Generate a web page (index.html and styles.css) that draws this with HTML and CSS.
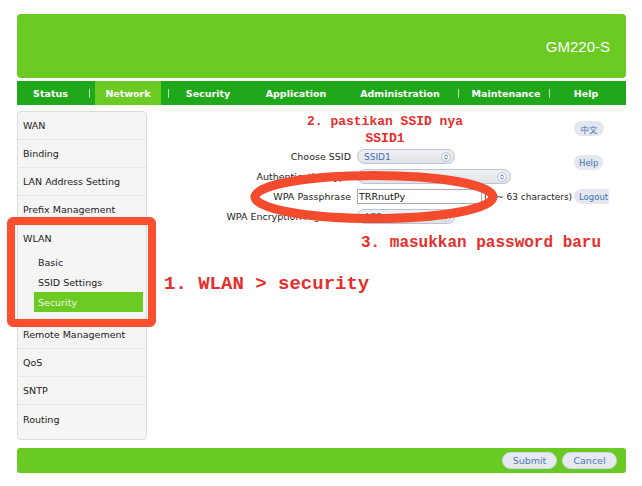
FILE: index.html
```html
<!DOCTYPE html>
<html lang="en">
<head>
    <meta charset="UTF-8">
    <meta name="viewport" content="width=device-width, initial-scale=1.0">
    <title>GM220-S - WLAN Security</title>
    <link rel="stylesheet" href="styles.css">
</head>
<body>

    <div class="page">
        <header class="banner">
            <span class="model">GM220-S</span>
        </header>

        <nav class="menu">
            <a>Status</a><span class="sep"></span>
            <a class="active">Network</a><span class="sep"></span>
            <a>Security</a>
            <a>Application</a>
            <a>Administration</a><span class="sep"></span>
            <a>Maintenance</a><span class="sep"></span>
            <a>Help</a>
        </nav>

        <div class="main">
            <aside class="sidebar">
                <div class="item">WAN</div>
                <div class="item">Binding</div>
                <div class="item">LAN Address Setting</div>
                <div class="item">Prefix Management</div>
                <div class="group">
                    <div class="item plain">WLAN</div>
                    <div class="sub">Basic</div>
                    <div class="sub">SSID Settings</div>
                    <div class="sub current">Security</div>
                </div>
                <div class="item">Remote Management</div>
                <div class="item">QoS</div>
                <div class="item">SNTP</div>
                <div class="item last">Routing</div>
            </aside>

            <section class="content">
                <div class="form">
                    <label>Choose SSID</label>
                    <div class="field">
                        <span class="select short">SSID1
                            <svg class="arrows" viewBox="0 0 10 10"><circle cx="5" cy="5" r="4.3"/><path d="M3.3 4.3 5 2.8 6.7 4.3M3.3 5.7 5 7.2 6.7 5.7"/></svg>
                        </span>
                    </div>

                    <label>Authentication Type</label>
                    <div class="field">
                        <span class="select long">WPA2-PSK
                            <svg class="arrows" viewBox="0 0 10 10"><circle cx="5" cy="5" r="4.3"/><path d="M3.3 4.3 5 2.8 6.7 4.3M3.3 5.7 5 7.2 6.7 5.7"/></svg>
                        </span>
                    </div>

                    <label>WPA Passphrase</label>
                    <div class="field">
                        <span class="text-input">TRRnutPy</span>
                        <span class="hint">(8 ~ 63 characters)</span>
                    </div>

                    <label>WPA Encryption Algorithm</label>
                    <div class="field">
                        <span class="select short">AES
                            <svg class="arrows" viewBox="0 0 10 10"><circle cx="5" cy="5" r="4.3"/><path d="M3.3 4.3 5 2.8 6.7 4.3M3.3 5.7 5 7.2 6.7 5.7"/></svg>
                        </span>
                    </div>
                </div>

                <div class="tools">
                    <span class="pill lang">中文</span>
                    <span class="pill">Help</span>
                    <span class="pill">Logout</span>
                </div>
            </section>
        </div>

        <footer class="actions">
            <button class="btn">Submit</button>
            <button class="btn">Cancel</button>
        </footer>

        <!-- coretan petunjuk di atas screenshot -->
        <div class="mark-box"></div>
        <svg class="mark-ring" viewBox="0 0 262 64"><ellipse cx="129" cy="32" rx="119" ry="21.5"/></svg>
        <p class="note note-ssid">2. pastikan SSID nya<br>SSID1</p>
        <p class="note note-wlan">1. WLAN &gt; security</p>
        <p class="note note-pass">3. masukkan password baru</p>
    </div>

</body>
</html>
```

FILE: styles.css
```css
* {
    margin: 0;
    padding: 0;
    box-sizing: border-box;
}

body {
    font-family: 'DejaVu Sans', Verdana, sans-serif;
    background: #fff;
    color: #222;
}

.page {
    position: relative;
    width: 642px;
    height: 486px;
    padding: 14px 16px 0 17px;
}

.banner {
    height: 64px;
    background-color: #6bcb22;
    border-radius: 4px;
    display: flex;
    justify-content: flex-end;
    align-items: center;
    padding-right: 16px;
}

.model {
    font-family: 'Liberation Sans', Arial, sans-serif;
    font-size: 15px;
    color: #fff;
}

.menu {
    margin-top: 3px;
    height: 24px;
    background-color: #1fa81a;
    display: grid;
    grid-template-columns: 67px 11px 66px 14px 66px 110px 98px 18px 78px 8px 66px 1fr;
    align-items: center;
}

.menu a {
    height: 100%;
    display: flex;
    justify-content: center;
    align-items: center;
    color: #fff;
    font-size: 9.5px;
    font-weight: bold;
}

.menu a.active {
    background-color: #6bcb22;
}

.menu .sep {
    justify-self: center;
    width: 1px;
    height: 9px;
    background-color: rgba(255, 255, 255, 0.7);
}

.main {
    display: flex;
    margin-top: 6px;
}

.sidebar {
    flex: none;
    width: 130px;
    height: 329px;
    background-color: #f5f5f5;
    border: 1px solid #dcdcdc;
    border-radius: 4px;
    padding-bottom: 8px;
}

.item {
    height: 28px;
    display: flex;
    align-items: center;
    padding-left: 5px;
    font-size: 9.5px;
    color: #222;
    border-bottom: 1px solid #e6e6e6;
}

.item.plain,
.item.last {
    border-bottom: none;
}

.group {
    padding-bottom: 8px;
    border-bottom: 1px solid #e6e6e6;
}

.sub {
    height: 20px;
    margin: 0 3px 0 16px;
    padding-left: 4px;
    display: flex;
    align-items: center;
    font-size: 9.5px;
    color: #222;
}

.sub.current {
    background-color: #6bcb22;
    color: #eef9e2;
}

.content {
    flex: 1;
    display: flex;
}

.form {
    flex: 1;
    display: grid;
    grid-template-columns: 204px auto;
    column-gap: 6px;
    row-gap: 5px;
    align-content: start;
    padding-top: 38px;
}

.form label {
    height: 15px;
    display: flex;
    justify-content: flex-end;
    align-items: center;
    font-size: 9.5px;
    color: #222;
}

.field {
    display: flex;
    align-items: center;
    height: 15px;
}

.select {
    height: 15px;
    display: flex;
    align-items: center;
    justify-content: space-between;
    padding: 0 3px 0 6px;
    background: linear-gradient(#f1f1f4, #e1e2e7);
    border: 1px solid #b8c4d6;
    border-radius: 8px;
    font-size: 9px;
    color: #3b6db4;
}

.select.short {
    width: 98px;
}

.select.long {
    width: 154px;
}

.arrows {
    width: 10px;
    height: 10px;
}

.arrows circle {
    fill: #fff;
    stroke: #9fb2cc;
    stroke-width: 0.8;
}

.arrows path {
    fill: none;
    stroke: #3d6fb5;
    stroke-width: 1;
}

.text-input {
    width: 125px;
    height: 15px;
    display: flex;
    align-items: center;
    padding-left: 1px;
    background-color: #fff;
    border: 1px solid #a9a9a9;
    font-size: 9.5px;
    color: #111;
}

.hint {
    margin-left: 2px;
    font-size: 9px;
    color: #222;
    white-space: nowrap;
}

.tools {
    flex: none;
    width: 35px;
    margin-right: 17px;
    padding-top: 10px;
    display: flex;
    flex-direction: column;
    align-items: flex-start;
    gap: 19px;
    overflow: hidden;
}

.pill {
    height: 15px;
    padding: 0 5px;
    display: flex;
    align-items: center;
    background-color: #e4e7ee;
    border-radius: 8px;
    font-size: 8.5px;
    color: #3f73b8;
    white-space: nowrap;
}

.pill.lang {
    width: 30px;
    justify-content: center;
    font-family: 'Noto Sans CJK SC', sans-serif;
}

.actions {
    margin-top: 8px;
    height: 25px;
    background-color: #68ca22;
    border-radius: 3px;
    display: flex;
    justify-content: flex-end;
    align-items: center;
    gap: 5px;
    padding-right: 9px;
}

.btn {
    width: 55px;
    height: 17px;
    border: 1px solid #d0d7e4;
    border-radius: 9px;
    background-color: #e7e9f1;
    font-family: 'DejaVu Sans', Verdana, sans-serif;
    font-size: 9.5px;
    color: #4a78b8;
}

.mark-box {
    position: absolute;
    left: 7px;
    top: 217px;
    width: 149px;
    height: 110px;
    border: 8px solid #ff4f2e;
    border-radius: 6px;
}

.mark-ring {
    position: absolute;
    left: 245px;
    top: 165px;
    width: 262px;
    height: 64px;
}

.mark-ring ellipse {
    fill: none;
    stroke: #f44a2d;
    stroke-width: 9;
}

.note {
    position: absolute;
    font-family: 'Liberation Mono', 'Courier New', monospace;
    font-weight: bold;
    color: #e62e2a;
    white-space: nowrap;
}

.note-ssid {
    left: 307px;
    top: 113px;
    font-size: 13px;
    line-height: 17px;
    text-align: center;
}

.note-wlan {
    left: 164px;
    top: 273px;
    font-size: 19px;
}

.note-pass {
    left: 361px;
    top: 234px;
    font-size: 16px;
}
```
